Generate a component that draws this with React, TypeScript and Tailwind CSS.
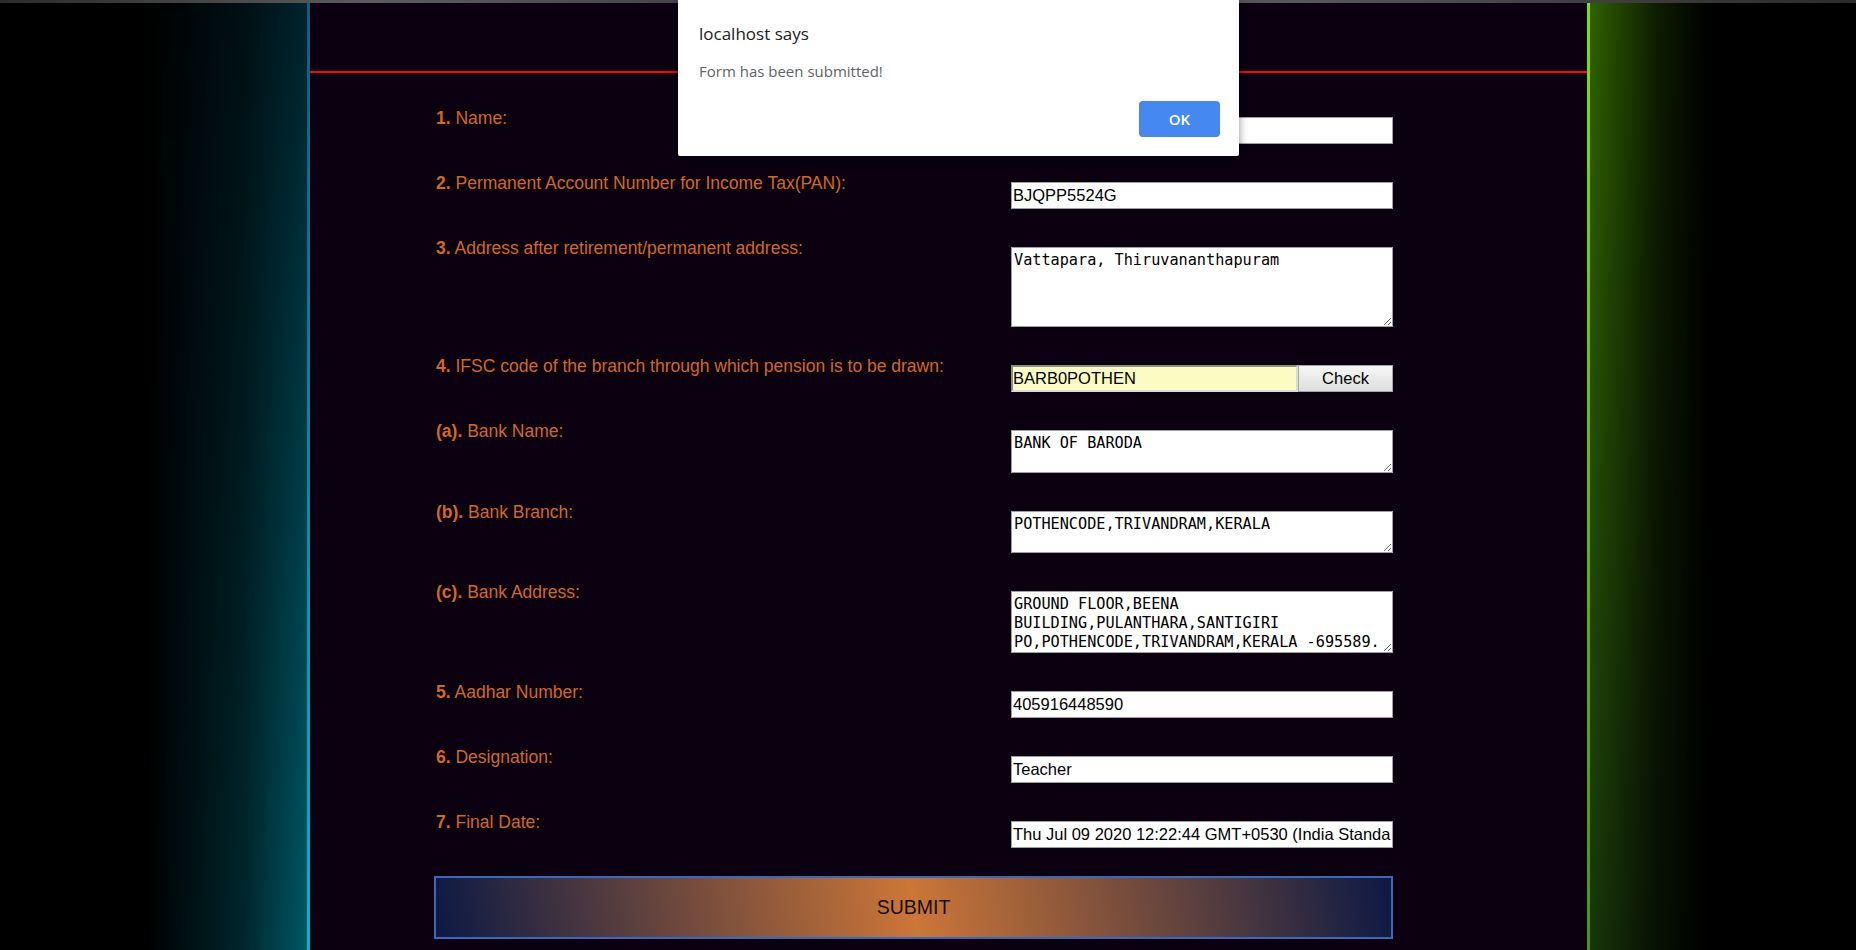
import type { ReactNode } from "react"

type Row = {
  num: string
  label: string
  field: ReactNode
}

const inputCls =
  "block h-[27px] w-[382px] border border-[#a0a0a0] bg-white px-[1px] text-[16.5px] leading-[25px] text-black outline-none font-['Liberation_Sans',Arial,sans-serif]"

const areaCls =
  "block w-[382px] resize overflow-hidden border border-[#a0a0a0] bg-white px-[2px] pt-[3px] text-[15.2px] leading-[19px] text-black outline-none font-['DejaVu_Sans_Mono',monospace]"

const rows: Row[] = [
  { num: "1.", label: "Name:", field: <input className={inputCls} defaultValue="" readOnly /> },
  {
    num: "2.",
    label: "Permanent Account Number for Income Tax(PAN):",
    field: <input className={inputCls} defaultValue="BJQPP5524G" readOnly />,
  },
  {
    num: "3.",
    label: "Address after retirement/permanent address:",
    field: <textarea className={`${areaCls} h-[80px]`} defaultValue="Vattapara, Thiruvananthapuram" readOnly />,
  },
  {
    num: "4.",
    label: "IFSC code of the branch through which pension is to be drawn:",
    field: (
      <div className="flex h-[27px] w-[382px]">
        <input
          className="h-full w-[287px] border-2 border-t-[#8c8c8c] border-l-[#8c8c8c] border-r-[#dcdcdc] border-b-[#dcdcdc] bg-[#fafcc2] px-0 text-[16.5px] text-black outline-none font-['Liberation_Sans',Arial,sans-serif]"
          defaultValue="BARB0POTHEN"
          readOnly
        />
        <button
          type="button"
          className="h-full flex-1 border border-[#a6a6a6] bg-[linear-gradient(to_bottom,#f6f6f6,#dedede)] text-[16.5px] text-black font-['Liberation_Sans',Arial,sans-serif]"
        >
          Check
        </button>
      </div>
    ),
  },
  {
    num: "(a).",
    label: "Bank Name:",
    field: <textarea className={`${areaCls} h-[43px]`} defaultValue="BANK OF BARODA" readOnly />,
  },
  {
    num: "(b).",
    label: "Bank Branch:",
    field: <textarea className={`${areaCls} h-[42px]`} defaultValue="POTHENCODE,TRIVANDRAM,KERALA" readOnly />,
  },
  {
    num: "(c).",
    label: "Bank Address:",
    field: (
      <textarea
        className={`${areaCls} h-[62px]`}
        defaultValue={"GROUND FLOOR,BEENA\nBUILDING,PULANTHARA,SANTIGIRI\nPO,POTHENCODE,TRIVANDRAM,KERALA -695589."}
        readOnly
      />
    ),
  },
  { num: "5.", label: "Aadhar Number:", field: <input className={inputCls} defaultValue="405916448590" readOnly /> },
  { num: "6.", label: "Designation:", field: <input className={inputCls} defaultValue="Teacher" readOnly /> },
  {
    num: "7.",
    label: "Final Date:",
    field: (
      <input className={inputCls} defaultValue="Thu Jul 09 2020 12:22:44 GMT+0530 (India Standard Time)" readOnly />
    ),
  },
]

function AlertBox() {
  return (
    <div className="absolute left-[678px] top-0 flex h-[156px] w-[561px] flex-col rounded-b-[2px] bg-white px-[21px] pt-[23px] pb-[19px] shadow-[0_2px_8px_rgba(0,0,0,0.45)] font-['Open_Sans','Noto_Sans',sans-serif]">
      <div className="text-[17px] leading-[22px] text-[#202124]">localhost says</div>
      <div className="mt-[16px] text-[15px] leading-[20px] text-[#5f6368]">Form has been submitted!</div>
      <div className="mt-auto flex justify-end">
        <button
          type="button"
          className="-mr-[2px] h-[36px] w-[81px] rounded-[4px] bg-[#4688f1] text-[15px] font-semibold text-white"
        >
          OK
        </button>
      </div>
    </div>
  )
}

export default function App() {
  return (
    <div className="relative flex h-[950px] w-full flex-col overflow-hidden bg-black font-['Liberation_Sans',Arial,sans-serif]">
      {/* window edge */}
      <div className="h-[3px] w-full bg-[linear-gradient(to_right,#2b2b2b,#5c5c5c_20%,#3a3a3a_45%,#575757_70%,#2b2b2b)]" />

      <div className="flex flex-1">
        {/* left glow */}
        <div className="w-[307px] shrink-0 bg-[linear-gradient(to_right,#000_48%,rgba(0,0,0,0.55)_80%,rgba(0,0,0,0)),linear-gradient(to_bottom,#00232d,#005866)]" />
        <div className="w-[3px] shrink-0 bg-[linear-gradient(to_bottom,#145a7a,#00b7d0)]" />

        <main className="w-[1277px] shrink-0 bg-[#0a0010] pt-[68px]">
          <div className="h-[2px] bg-[#ff0000]" />

          <form className="ml-[123px] w-[960px] pt-[35px]" onSubmit={(e) => e.preventDefault()}>
            <div className="flex flex-col gap-[29px]">
              {rows.map((r) => (
                <div key={r.num} className="flex items-start justify-between">
                  <label className="pl-[3px] text-[17.5px] leading-[20px] text-[#d2691e]">
                    <b>{r.num}</b> {r.label}
                  </label>
                  <div className="mt-[9px]">{r.field}</div>
                </div>
              ))}
            </div>

            <button
              type="submit"
              className="mt-[28px] ml-[1px] flex h-[63px] w-[959px] items-center justify-center border-2 border-[#3b68bb] bg-[linear-gradient(80deg,#0c1944,#cc7637_50%,#0c1944)] text-[19.5px] text-[#111]"
            >
              SUBMIT
            </button>
          </form>
        </main>

        {/* right glow */}
        <div className="w-[3px] shrink-0 bg-[linear-gradient(to_bottom,#82e100,#4a9412)]" />
        <div className="flex-1 bg-[linear-gradient(to_right,rgba(0,0,0,0),rgba(0,0,0,0.7)_25%,#000_45%),linear-gradient(to_bottom,#2f6200,#18360a)]" />
      </div>

      <AlertBox />
    </div>
  )
}
